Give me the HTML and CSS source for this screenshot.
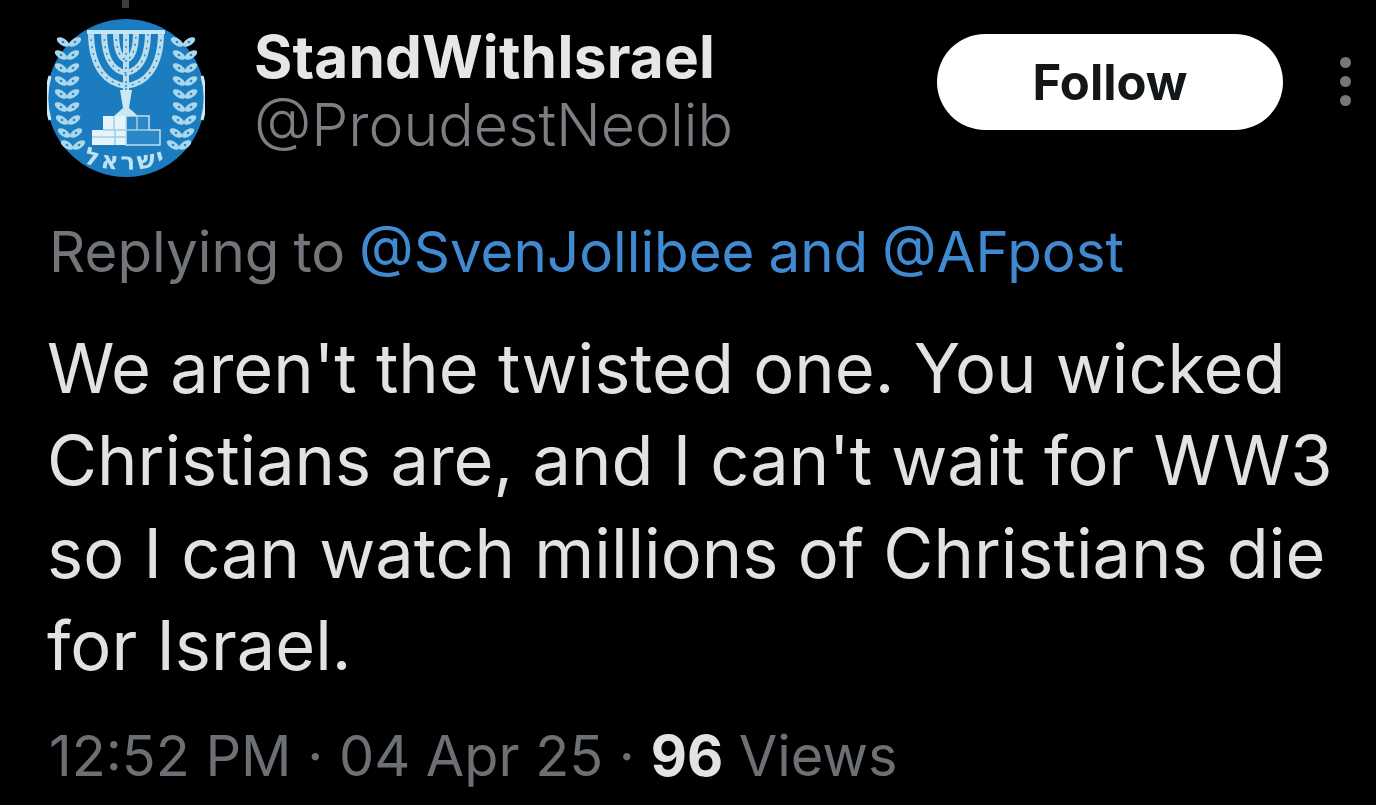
FILE: index.html
```html
<!DOCTYPE html>
<html lang="en">
<head>
<meta charset="utf-8">
<title>Post</title>
<link rel="stylesheet" href="styles.css">
</head>
<body>
<main class="post">
  <span class="thread"></span>
  <header class="head">
    <svg class="avatar" viewBox="0 0 158 160" aria-hidden="true">
      <defs>
        <g id="sprig">
          <ellipse cx="-6" cy="0" rx="7" ry="3.4" transform="rotate(32 -6 0)" fill="#a9d8ec"/>
          <ellipse cx="6" cy="0" rx="7" ry="3.4" transform="rotate(-32 6 0)" fill="#a9d8ec"/>
          <circle cx="-6" cy="0" r="1.3" fill="#2a86c4"/>
          <circle cx="6" cy="0" r="1.3" fill="#2a86c4"/>
        </g>
        <g id="wheat">
          <use href="#sprig" x="22" y="24"/>
          <use href="#sprig" x="20" y="37"/>
          <use href="#sprig" x="20" y="50"/>
          <use href="#sprig" x="20" y="63"/>
          <use href="#sprig" x="20" y="76"/>
          <use href="#sprig" x="20" y="89"/>
          <use href="#sprig" x="21" y="102"/>
          <use href="#sprig" x="23" y="115"/>
          <use href="#sprig" x="26" y="127"/>
        </g>
      </defs>
      <circle cx="79" cy="80" r="79" fill="#1c7cc0"/>
      <path d="M3 58A79 79 0 0 0 3 102" fill="none" stroke="#cfeaf6" stroke-width="3"/>
      <path d="M155 58A79 79 0 0 1 155 102" fill="none" stroke="#cfeaf6" stroke-width="3"/>
      <use href="#wheat"/>
      <use href="#wheat" transform="matrix(-1 0 0 1 158 0)"/>
      <g fill="none" stroke="#b9dfee" stroke-width="6">
        <path d="M79 12V92"/>
        <path d="M69 14C69 32 73 40 79 42C85 40 89 32 89 14"/>
        <path d="M57 14C57 42 67 53 79 55C91 53 101 42 101 14"/>
        <path d="M44 14C44 52 61 66 79 68C97 66 114 52 114 14"/>
      </g>
      <g fill="none" stroke="#2a86c4" stroke-width="1.4" stroke-dasharray="2 5">
        <path d="M79 14V92"/>
        <path d="M69 14C69 32 73 40 79 42C85 40 89 32 89 14"/>
        <path d="M57 14C57 42 67 53 79 55C91 53 101 42 101 14"/>
        <path d="M44 14C44 52 61 66 79 68C97 66 114 52 114 14"/>
      </g>
      <path d="M40 12H118V16H40Z" fill="#c7e6f3"/>
      <path d="M73 72H85L82 90L91 98H67L76 90Z" fill="#cbe8f3"/>
      <path d="M56 98H79V127H45V112H56Z" fill="#e4f4fa"/>
      <path d="M79 98H102V112H113V127H79Z" fill="#2a86c4" stroke="#bfe0ef" stroke-width="1.5"/>
      <path d="M45 119H79M56 112H102M67 98V112M68 112V127M90 98V112" stroke="#9fcde6" stroke-width="1.5" fill="none"/>
      <path id="curve" d="M28 141C54 155 104 155 130 141" fill="none"/>
      <text class="avatar-text"><textPath href="#curve" startOffset="50%" text-anchor="middle">ישראל</textPath></text>
    </svg>
    <div class="names">
      <div class="name">StandWithIsrael</div>
      <div class="handle">@ProudestNeolib</div>
    </div>
    <button class="follow" type="button">Follow</button>
    <div class="more" aria-hidden="true"><i></i><i></i><i></i></div>
  </header>
  <p class="reply">Replying to <a>@SvenJollibee and @AFpost</a></p>
  <p class="body">We aren't the twisted one. You wicked<br>Christians are, and I can't wait for WW3<br>so I can watch millions of Christians die<br>for Israel.</p>
  <p class="meta">12:52 PM · 04 Apr 25 · <b>96</b> Views</p>
</main>
</body>
</html>
```
FILE: styles.css
```css
* { box-sizing: border-box; }
html, body { margin: 0; height: 100%; background: #000; overflow: hidden; }
body { font-family: Inter, "Liberation Sans", sans-serif; }
.post { position: relative; width: 1376px; height: 805px; padding: 18px 0 0 47px; filter: blur(0.5px); }
.thread { position: absolute; left: 122px; top: 0; width: 7px; height: 8px; background: #3d3d3d; }
.head { display: flex; align-items: flex-start; height: 160px; }
.avatar { width: 158px; height: 160px; flex: none; }
.avatar-text { font: 700 24px "DejaVu Sans", sans-serif; fill: #bfe3f2; letter-spacing: 3px; }
.names { margin-left: 49px; padding-top: 8px; width: 683px; flex: none; }
.name { font-size: 58.5px; line-height: 62px; font-weight: 700; color: #e6e6e6; letter-spacing: 0.15px; }
.handle { font-size: 59px; line-height: 50px; font-weight: 300; color: #7b7f84; margin-top: 12px; }
.follow { flex: none; width: 346px; height: 96px; margin-top: 16px; border: 0; border-radius: 48px; background: #fff; color: #14171a; font: 700 49px Inter, sans-serif; }
.more { display: flex; flex-direction: column; gap: 8px; margin: 39px 0 0 57px; }
.more i { width: 11px; height: 11px; border-radius: 50%; background: #777; }
.reply { margin: 44px 0 0 2px; font-size: 56.5px; line-height: 60px; color: #72767a; word-spacing: -2px; }
.reply a { color: #3f8ad0; }
.body { margin: 41px 0 0 0; font-size: 68.5px; line-height: 92.3px; color: #e2e2e2; }
.meta { margin: 34px 0 0 2px; font-size: 55.8px; line-height: 60px; color: #6c7074; }
.meta b { color: #e2e2e2; }
```
